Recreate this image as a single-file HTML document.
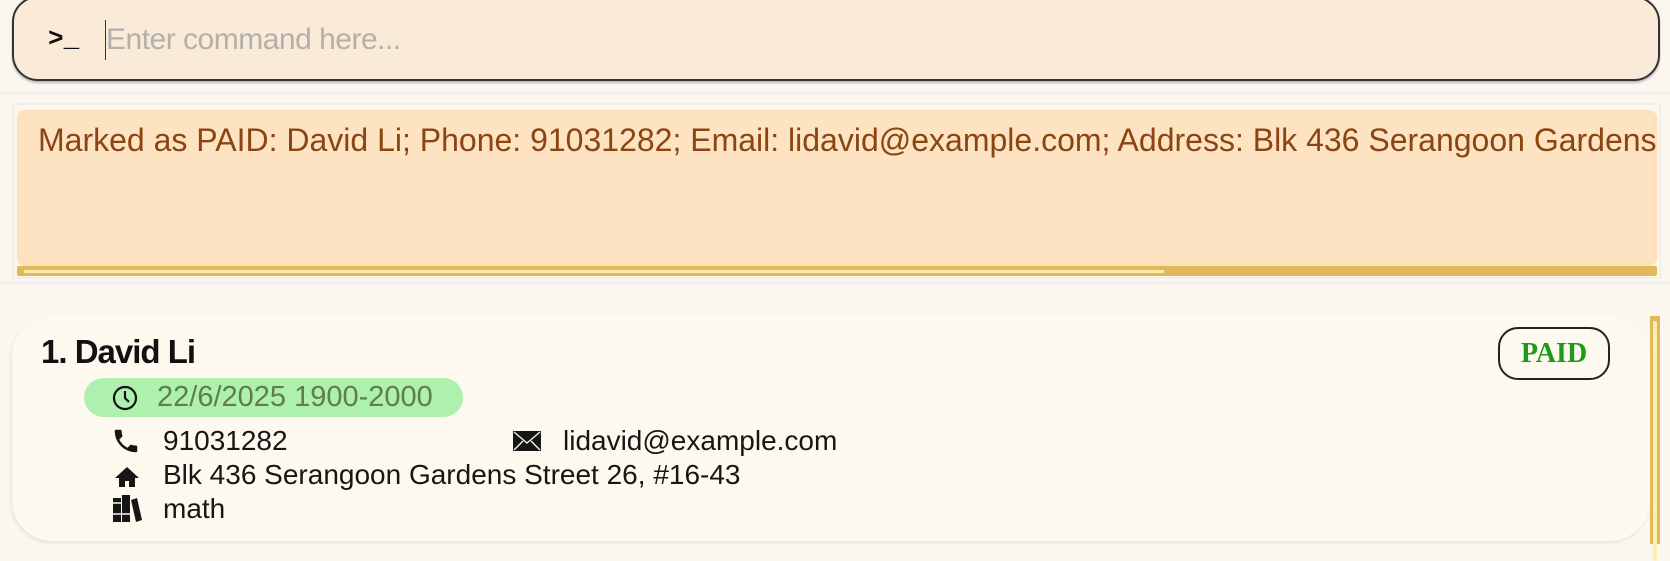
<!DOCTYPE html>
<html><head><meta charset="utf-8"><style>
*{margin:0;padding:0;box-sizing:border-box}
body{width:1670px;height:544px;overflow:hidden;background:#fcf7ee;font-family:"Liberation Sans",sans-serif;position:relative}
.cmd{position:absolute;left:12px;top:-4px;width:1648px;height:85px;background:#f9ebd7;border:2px solid #333;border-radius:26px;box-shadow:0 2px 2px #bbb}
.cmd .p{position:absolute;left:34px;top:26px;font:bold 26px "Liberation Mono",monospace;color:#111}
.cmd .caret{position:absolute;left:91px;top:22px;width:1px;height:40px;background:#333}
.cmd .ph{position:absolute;left:92px;top:25px;font-size:30px;color:#b3b0ab;letter-spacing:-0.5px}
.sep{position:absolute;left:0;width:1670px;height:4px;background:#f3f1ed}
.res{position:absolute;left:12px;top:103px;width:1649px;height:176px;border:2px solid #f1efeb;background:#fcf7ee;overflow:hidden}
.res .in{position:absolute;left:3px;top:5px;width:1640px;height:156px;background:#fde3c2;border-radius:8px;box-shadow:inset 0 0 8px #fcd9ae}
.res .t{position:absolute;left:24px;top:17px;font-size:32px;color:#8b4513;white-space:nowrap}
.res .sb{position:absolute;left:3px;top:161px;width:1640px;height:10px;background:#e3b85a;border-radius:2px}
.res .sb i{position:absolute;left:7px;top:4px;width:1140px;height:3px;background:#fbeeb0;border-radius:2px}
.card{position:absolute;left:12px;top:316px;width:1638px;height:225px;background:#fdf9ef;border-radius:40px;box-shadow:-1px 2px 3px #e6e2da}
.name{position:absolute;left:29px;top:17px;font-size:33px;font-weight:bold;color:#111;letter-spacing:-1px}
.pill{position:absolute;left:72px;top:62px;width:379px;height:39px;background:#aef0ae;border-radius:20px}
.pill span{position:absolute;left:73px;top:3px;font-size:29px;color:#5e7f48}
.row{position:absolute;font-size:28px;color:#161616;white-space:nowrap}
.paid{position:absolute;left:1486px;top:11px;width:112px;height:53px;border:2px solid #222;border-radius:20px;font:bold 28px "Liberation Serif",serif;color:#1b9a1b;text-align:center;line-height:49px}
.scroll{position:absolute;left:1650px;top:316px;width:10px;height:228px;background:#e3b85a}
.scroll i{position:absolute;left:3px;top:5px;width:4px;height:240px;background:#fbeeb0;border-radius:2px}
svg{position:absolute}
</style></head><body>
<div class="cmd"><span class="p">&gt;_</span><div class="caret"></div><span class="ph">Enter command here...</span></div>
<div class="sep" style="top:91px"></div>
<div class="res"><div class="in"></div><div class="t">Marked as PAID: David Li; Phone: 91031282; Email: lidavid@example.com; Address: Blk 436 Serangoon Gardens Street 26, #16-43</div><div class="sb"><i></i></div></div>
<div class="sep" style="top:281px"></div>
<div class="card">
<div class="name">1. David Li</div>
<div class="pill">
<svg style="left:28px;top:7px" width="26" height="26" viewBox="0 0 26 26"><circle cx="13" cy="13" r="11" fill="none" stroke="#111" stroke-width="2.2"/><path d="M13 6v7l4 4" fill="none" stroke="#111" stroke-width="2.2"/></svg>
<span>22/6/2025 1900-2000</span></div>
<svg style="left:98px;top:110px" width="32" height="30" viewBox="0 0 24 24"><path fill="#161616" d="M6.6 10.8c1.4 2.8 3.8 5.1 6.6 6.6l2.2-2.2c.3-.3.7-.4 1-.2 1.1.4 2.3.6 3.6.6.6 0 1 .4 1 1V20c0 .6-.4 1-1 1C10.6 21 3 13.4 3 4c0-.6.4-1 1-1h3.5c.6 0 1 .4 1 1 0 1.3.2 2.5.6 3.6.1.3 0 .7-.2 1z"/></svg>
<div class="row" style="left:151px;top:109px">91031282</div>
<svg style="left:501px;top:115px" width="28" height="20" viewBox="0 0 28 20"><rect width="28" height="20" fill="#161616"/><path d="M1 1l13 11L27 1M1 19l9-9M27 19l-9-9" fill="none" stroke="#fdf9ef" stroke-width="1.3"/></svg>
<div class="row" style="left:551px;top:109px">lidavid@example.com</div>
<svg style="left:102px;top:150px" width="26" height="22" viewBox="0 0 26 22"><path fill="#161616" d="M13 1L1 12h4v9h6v-6h4v6h6v-9h4z"/></svg>
<div class="row" style="left:151px;top:143px">Blk 436 Serangoon Gardens Street 26, #16-43</div>
<svg style="left:100px;top:178px" width="30" height="30" viewBox="0 0 30 30"><rect x="1" y="4" width="8" height="24" fill="#161616"/><rect x="10" y="1" width="8" height="27" fill="#161616"/><path fill="#161616" d="M19 6l6-2 5 22-6 2z"/><path d="M1 20h8M10 20h8M1 9h8" stroke="#fdf9ef" stroke-width="1.5"/></svg>
<div class="row" style="left:151px;top:177px">math</div>
<div class="paid">PAID</div>
</div>
<div class="scroll"><i></i></div>
</body></html>
